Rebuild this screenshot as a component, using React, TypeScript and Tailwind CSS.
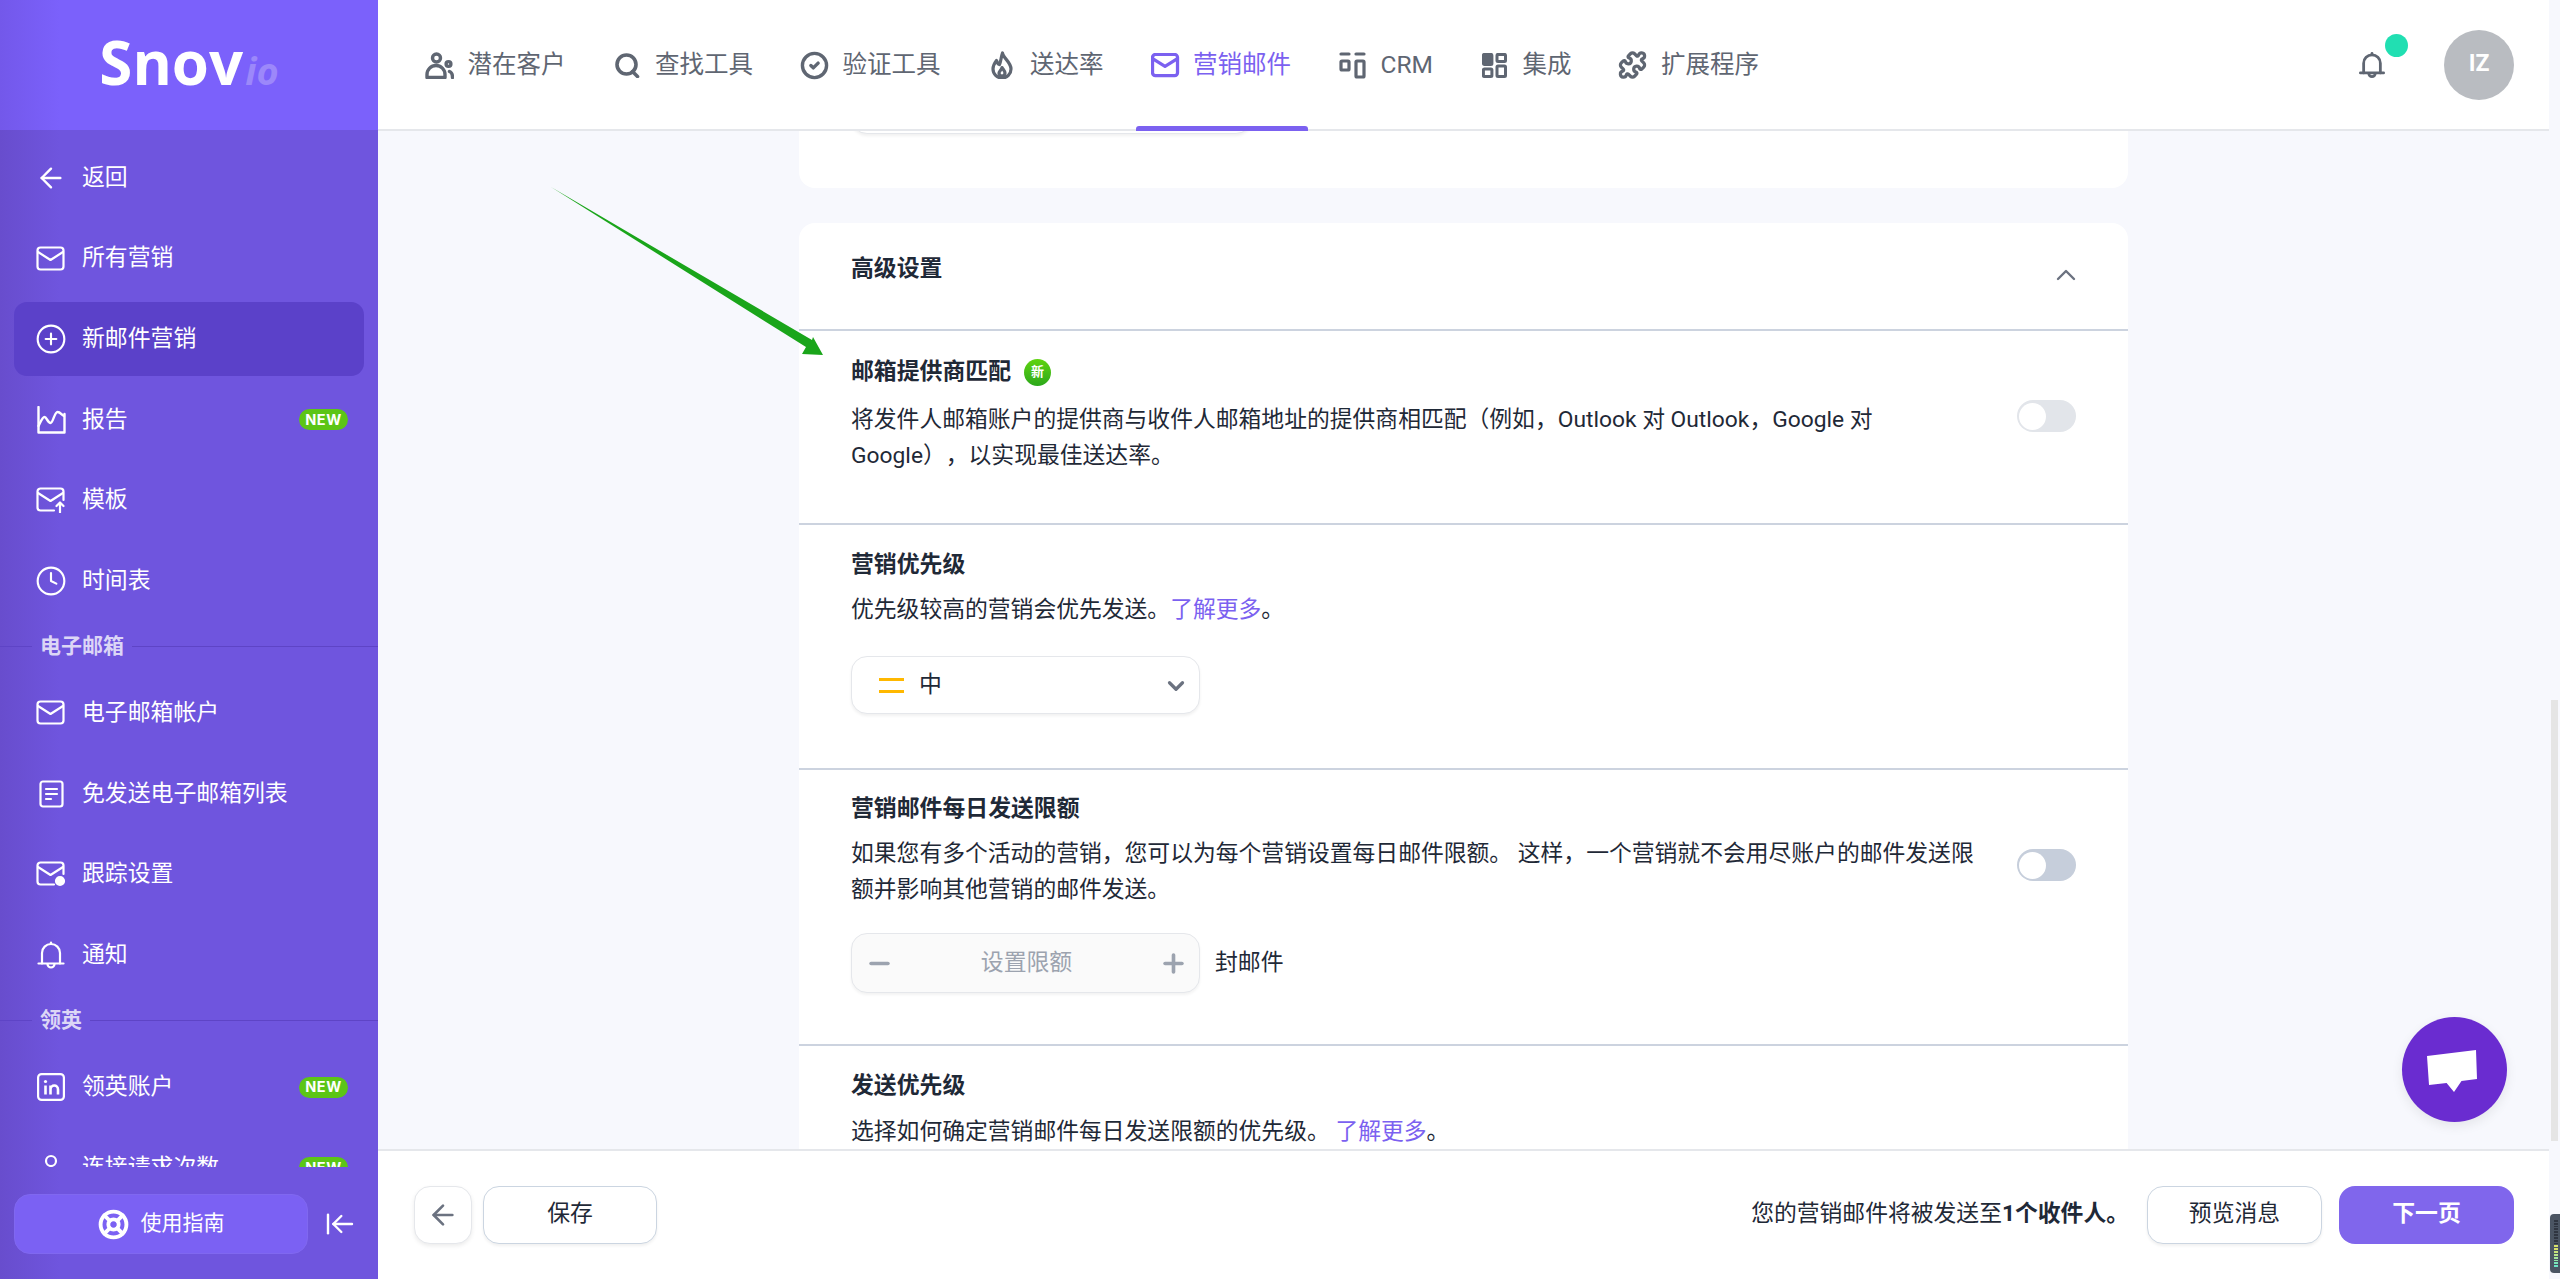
import { ArrowLeft, ArrowLeftToLine, ChevronDown, ChevronUp, CircleCheck, CirclePlus, Clock, LifeBuoy, Minus, Plus, Puzzle } from "lucide-react";
import type { ReactNode } from "react";

function MailIcon({ className = "", extra }: { className?: string; extra?: ReactNode }) {
  return (
    <svg viewBox="0 0 30 26" className={className} fill="none" stroke="currentColor" strokeWidth="2.2" strokeLinecap="round" strokeLinejoin="round">
      {extra ? (
        <path d="M27.5 13V4.5a3 3 0 0 0-3-3h-20a3 3 0 0 0-3 3v16a3 3 0 0 0 3 3H18" />
      ) : (
        <rect x="1.5" y="1.5" width="26" height="22" rx="3" />
      )}
      <path d="M2 6l12.5 8L27 6" />
      {extra}
    </svg>
  );
}

function ChartIcon() {
  return (
    <svg viewBox="0 0 29 28" className="h-[28px] w-[29px]" fill="none" stroke="currentColor" strokeWidth="2.4" strokeLinecap="round" strokeLinejoin="round">
      <path d="M1.5 1v25.500h26V8" />
      <path d="M1.5 20c2.500-5 4-9 6-9s3.500 6 6 6 4-11 7-11 4 3 6.500 4" />
    </svg>
  );
}

function DocIcon() {
  return (
    <svg viewBox="0 0 25 28" className="h-[28px] w-[25px]" fill="none" stroke="currentColor" strokeWidth="2.2" strokeLinecap="round" strokeLinejoin="round">
      <rect x="1.500" y="1.500" width="22" height="25" rx="2.500" />
      <path d="M7 9h11M7 14h11M7 19h5" />
    </svg>
  );
}

function BellIcon({ className = "", width = "2.2" }: { className?: string; width?: string }) {
  return (
    <svg viewBox="0 0 28 28" className={className} fill="none" stroke="currentColor" strokeWidth={width} strokeLinecap="round" strokeLinejoin="round">
      <path d="M1.500 22.500h25" />
      <path d="M5 22.500V12a9 9 0 0 1 18 0v10.500" />
      <path d="M14 3V1.500" />
      <path d="M10.500 23a3.500 3.500 0 0 0 7 0" />
    </svg>
  );
}

function LinkedInIcon() {
  return (
    <svg viewBox="0 0 28 28" className="h-[28px] w-[28px]" fill="none">
      <rect x="1.100" y="1.100" width="25.800" height="25.800" rx="3.500" stroke="currentColor" strokeWidth="2.200" />
      <circle cx="8.500" cy="8.500" r="1.600" fill="currentColor" />
      <path d="M8.500 12.500v9M13.500 21.500v-9M13.500 16.500c0-2.500 1.800-4 3.800-4s3.700 1.500 3.700 4v5" stroke="currentColor" strokeWidth="2.600" />
    </svg>
  );
}

function PersonIcon() {
  return (
    <svg viewBox="0 0 28 28" className="h-[28px] w-[28px]" fill="none" stroke="currentColor" strokeWidth="2.200">
      <circle cx="14" cy="7" r="5" />
      <path d="M4 27c0-6 4-10 10-10s10 4 10 10" />
    </svg>
  );
}

function UsersIcon() {
  return (
    <svg viewBox="0 0 29 27" className="h-[27px] w-[29px]" fill="none" stroke="currentColor" strokeWidth="3.400" strokeLinecap="round" strokeLinejoin="round">
      <circle cx="11.500" cy="6" r="4" />
      <circle cx="23.500" cy="12" r="2.400" />
      <path d="M2 25.500v-3a9 9 0 0 1 18 0v3z" />
      <path d="M24.500 19.500c2 .8 3 2.800 3 6" />
    </svg>
  );
}

function SearchQIcon() {
  return (
    <svg viewBox="0 0 25 25" className="h-[25px] w-[25px]" fill="none" stroke="currentColor" strokeWidth="3.600" strokeLinecap="round">
      <circle cx="11.500" cy="11.500" r="9.500" />
      <path d="M17.500 18.500l5 5" />
    </svg>
  );
}

function FlameIcon() {
  return (
    <svg viewBox="0 0 22 28" className="h-[28px] w-[22px]" fill="none" stroke="currentColor" strokeWidth="3.200" strokeLinecap="round" strokeLinejoin="round">
      <path d="M11.500 2c.500 5 8.500 9 8.500 16a9 9 0 0 1-18 0c0-4 2-6.500 3.500-8.500.5 2 1.500 3.500 3 4 1.500-3 1.500-7.500 3-11.500z" />
      <path d="M11 25c-2 0-3-1.500-3-3 0-2 2.500-3 3-5.500 1 2 3 3.500 3 5.500 0 1.500-1 3-3 3z" />
    </svg>
  );
}

function CrmIcon() {
  return (
    <svg viewBox="0 0 27 27" className="h-[27px] w-[27px]" fill="none" stroke="currentColor" strokeWidth="3.200" strokeLinecap="round" strokeLinejoin="round">
      <path d="M2 2h8M17 2h8" />
      <rect x="2" y="9" width="8" height="9" rx="1" />
      <rect x="17" y="9" width="8" height="16" rx="1" />
    </svg>
  );
}

function GridIcon() {
  return (
    <svg viewBox="0 0 25 25" className="h-[25px] w-[25px]" fill="none" stroke="currentColor" strokeWidth="3" strokeLinejoin="round">
      <rect x="1.400" y="1.400" width="8.500" height="10" rx="1" fill="currentColor" />
      <rect x="15" y="1.400" width="8.500" height="7" rx="1" />
      <rect x="1.400" y="16" width="8.500" height="7.500" rx="1" />
      <rect x="15" y="13" width="8.500" height="10.500" rx="1" />
    </svg>
  );
}

const sideIcons: Record<string, ReactNode> = {
  back: <ArrowLeft className="h-[32px] w-[32px]" strokeWidth={1.8} />,
  mail: <MailIcon className="h-[26px] w-[30px]" />,
  plus: <CirclePlus className="h-[34px] w-[34px]" strokeWidth={1.6} />,
  chart: <ChartIcon />,
  template: (
    <MailIcon
      className="h-[26px] w-[30px]"
      extra={<path d="M24 25.500V16M20.500 19l3.500-3.500 3.500 3.500" />}
    />
  ),
  clock: <Clock className="h-[34px] w-[34px]" strokeWidth={1.6} />,
  doc: <DocIcon />,
  track: <MailIcon className="h-[26px] w-[30px]" extra={<circle cx="24" cy="20" r="4" fill="currentColor" />} />,
  bell: <BellIcon className="h-[28px] w-[28px]" />,
  in: <LinkedInIcon />,
  person: <PersonIcon />,
};

function SideItem({ icon, label, active, badge }: { icon: string; label: string; active?: boolean; badge?: boolean }) {
  return (
    <div className={`flex h-[74px] shrink-0 items-center rounded-[13px] pl-[21px] pr-[16px] ${active ? "bg-[#5b41c9]" : ""}`}>
      <div className="flex w-[32px] shrink-0 items-center justify-center">{sideIcons[icon]}</div>
      <span className="ml-[15px] flex-1 text-[22.86px]">{label}</span>
      {badge && (
        <span className="flex h-[21px] w-[49px] items-center justify-center rounded-full bg-[#5cc516] text-[14.5px] font-bold tracking-[0.6px] [font-family:Inter,sans-serif]">
          NEW
        </span>
      )}
    </div>
  );
}

function SideHeading({ label }: { label: string }) {
  return (
    <div className="flex h-[45px] shrink-0 items-start">
      <div className="-ml-[14px] flex h-[44px] w-[378px] shrink-0 items-center">
        <div className="h-px w-[32px] bg-[#5e44c6]" />
        <span className="px-[8px] text-[21px] font-bold text-[#dcd6f6]">{label}</span>
        <div className="h-px flex-1 bg-[#5e44c6]" />
      </div>
    </div>
  );
}

function Sidebar() {
  return (
    <aside className="flex h-[1279px] w-[378px] shrink-0 flex-col bg-[linear-gradient(90deg,#684dcd_0,#6f55de_60px)] text-white">
      <div className="flex h-[130px] shrink-0 items-center justify-center bg-[linear-gradient(90deg,#7358ea_0,#7b61fb_60px)]">
        <div className="-mt-[6px] flex items-baseline">
          <span className="text-[60px] font-bold leading-none [font-family:'Open_Sans',sans-serif]">Snov</span>
          <span className="ml-[2px] text-[38px] font-bold italic leading-none text-[#9c88fa] [font-family:'Open_Sans',sans-serif]">io</span>
        </div>
      </div>
      <nav className="flex h-[1037px] shrink-0 flex-col gap-[6.6px] overflow-hidden px-[14px] pt-[11px]">
        <SideItem icon="back" label="返回" />
        <SideItem icon="mail" label="所有营销" />
        <SideItem icon="plus" label="新邮件营销" active />
        <SideItem icon="chart" label="报告" badge />
        <SideItem icon="template" label="模板" />
        <SideItem icon="clock" label="时间表" />
        <SideHeading label="电子邮箱" />
        <SideItem icon="mail" label="电子邮箱帐户" />
        <SideItem icon="doc" label="免发送电子邮箱列表" />
        <SideItem icon="track" label="跟踪设置" />
        <SideItem icon="bell" label="通知" />
        <SideHeading label="领英" />
        <SideItem icon="in" label="领英账户" badge />
        <SideItem icon="person" label="连接请求次数" badge />
      </nav>
      <div className="flex items-center px-[14px] pt-[27px]">
        <div className="flex h-[60px] w-[294px] items-center justify-center gap-[12px] rounded-[16px] border border-[#8068f0] bg-[#7b61f3] text-[21px]">
          <LifeBuoy className="h-[31px] w-[31px]" strokeWidth={3} />
          使用指南
        </div>
        <ArrowLeftToLine className="ml-[16px] h-[32px] w-[32px]" strokeWidth={1.8} />
      </div>
    </aside>
  );
}

const navItems: { label: string; icon: ReactNode; active?: boolean }[] = [
  { label: "潜在客户", icon: <UsersIcon /> },
  { label: "查找工具", icon: <SearchQIcon /> },
  { label: "验证工具", icon: <CircleCheck className="h-[31px] w-[31px]" strokeWidth={2.8} /> },
  { label: "送达率", icon: <FlameIcon /> },
  { label: "营销邮件", icon: <MailIcon className="h-[25px] w-[29px] [&_*]:[stroke-width:3.4px]" />, active: true },
  { label: "CRM", icon: <CrmIcon /> },
  { label: "集成", icon: <GridIcon /> },
  { label: "扩展程序", icon: <Puzzle className="h-[30px] w-[30px]" strokeWidth={2.7} /> },
];

function Header() {
  return (
    <header className="flex h-[131px] shrink-0 items-center justify-between border-b-2 border-[#e5e7eb] bg-white pl-[32px] pr-[35px]">
      <div className="flex h-full gap-[17px]">
        {navItems.map((item) => (
          <div
            key={item.label}
            className={`relative flex items-center gap-[13.5px] px-[15px] pt-[1px] text-[24.5px] ${item.active ? "text-[#7b61f0]" : "text-[#5f6672]"}`}
          >
            <div className="flex w-[29px] items-center justify-center">{item.icon}</div>
            {item.label}
            {item.active && <div className="absolute -bottom-[2px] -right-[2px] left-0 h-[5px] rounded-t-[3px] bg-[#7b61f0]" />}
          </div>
        ))}
      </div>
      <div className="flex items-center gap-[59px]">
        <div className="relative text-[#5f6672]">
          <BellIcon className="h-[32px] w-[26px]" width="3" />
          <div className="absolute -right-[23px] -top-[15px] h-[23px] w-[23px] rounded-full bg-[#21dfb2]" />
        </div>
        <div className="flex h-[70px] w-[70px] items-center justify-center rounded-full bg-[#b9bcc1] text-[23px] font-bold text-white">IZ</div>
      </div>
    </header>
  );
}

function Toggle({ className }: { className: string }) {
  return (
    <div className={`flex h-[32px] w-[59px] shrink-0 items-center rounded-full pl-[2px] ${className}`}>
      <div className="h-[27px] w-[27px] rounded-full bg-white" />
    </div>
  );
}

function Title({ children }: { children: ReactNode }) {
  return <div className="text-[22.86px] font-bold leading-[36px] text-[#1f2937]">{children}</div>;
}

function Desc({ children, className = "" }: { children: ReactNode; className?: string }) {
  return <p className={`text-[22.8px] leading-[36px] text-[#1f2937] ${className}`}>{children}</p>;
}

const linkCls = "text-[#7b61f0]";

function ChatBubble() {
  return (
    <div className="absolute bottom-[27px] right-[42px] flex h-[105px] w-[105px] items-center justify-center rounded-full bg-[#6a2cd0] shadow-[0_4px_12px_rgba(0,0,0,0.08)]">
      <svg viewBox="0 0 105 105" className="h-[105px] w-[105px]">
        <path fill="#fff" d="M25 39l49-6 1 29-15.500 2-7.500 11-7.400-9-17.600 2z" />
      </svg>
    </div>
  );
}

function Main() {
  return (
    <main className="relative flex-1 overflow-hidden bg-[#f7f8fd]">
      <div className="mx-auto w-[1329px]">
        <div className="h-[57px] overflow-hidden rounded-b-[16px] bg-white pl-[52px]">
          <div className="-mt-[55px] h-[58px] w-[401px] rounded-[16px] border border-[#e5e7eb] bg-white shadow-[0_2px_3px_rgba(0,0,0,0.06)]" />
        </div>

        <div className="mt-[35px] rounded-t-[16px] bg-white">
          <div className="flex h-[108px] items-start justify-between border-b-2 border-[#ccd3df] pl-[52px] pr-[46px] pt-[28px]">
            <Title>高级设置</Title>
            <ChevronUp className="mt-[8px] h-[32px] w-[32px] text-[#6b7280]" strokeWidth={1.8} />
          </div>

          <section className="flex h-[194px] items-start justify-between border-b-2 border-[#ccd3df] pl-[52px] pr-[52px] pt-[23px]">
            <div>
              <div className="flex items-center gap-[13px]">
                <Title>邮箱提供商匹配</Title>
                <div className="flex h-[27px] w-[27px] items-center justify-center rounded-full bg-gradient-to-b from-[#5fd40f] to-[#2aa81a] text-[13px] font-bold text-white">
                  新
                </div>
              </div>
              <Desc className="mt-[12px]">
                将发件人邮箱账户的提供商与收件人邮箱地址的提供商相匹配（例如，Outlook 对 Outlook，Google 对
                <br />
                Google），以实现最佳送达率。
              </Desc>
            </div>
            <Toggle className="mt-[46px] bg-[#e2e5ea]" />
          </section>

          <section className="h-[245px] border-b-2 border-[#ccd3df] pl-[52px] pr-[52px] pt-[22px]">
            <Title>营销优先级</Title>
            <Desc className="mt-[9px]">
              优先级较高的营销会优先发送。<span className={linkCls}>了解更多</span>。
            </Desc>
            <div className="mt-[28px] flex h-[58px] w-[349px] items-center rounded-[16px] border border-[#e5e7eb] bg-white pl-[27px] pr-[10px] pt-[1px] text-[22.86px] text-[#1f2937] shadow-[0_2px_3px_rgba(0,0,0,0.06)]">
              <div className="flex h-[15px] w-[25px] flex-col justify-between">
                <div className="h-[3px] bg-[#ffb800]" />
                <div className="h-[3px] bg-[#ffb800]" />
              </div>
              <span className="ml-[15px] flex-1">中</span>
              <ChevronDown className="h-[26px] w-[26px] text-[#6b7280]" strokeWidth={3} />
            </div>
          </section>

          <section className="h-[276px] border-b-2 border-[#ccd3df] pl-[52px] pr-[52px] pt-[21px]">
            <Title>营销邮件每日发送限额</Title>
            <div className="flex items-start justify-between">
              <Desc className="mt-[9px]">
                如果您有多个活动的营销，您可以为每个营销设置每日邮件限额。 这样，一个营销就不会用尽账户的邮件发送限
                <br />
                额并影响其他营销的邮件发送。
              </Desc>
              <Toggle className="mt-[22px] bg-[#c6cedb]" />
            </div>
            <div className="mt-[25px] flex items-center">
              <div className="flex h-[60px] w-[349px] items-center justify-between rounded-[16px] border border-[#e5e7eb] bg-[#fafafa] pl-[13px] pr-[11px] text-[22.86px] text-[#9ca3af] shadow-[0_2px_3px_rgba(0,0,0,0.05)]">
                <Minus className="h-[29px] w-[29px]" strokeWidth={3} />
                设置限额
                <Plus className="h-[29px] w-[29px]" strokeWidth={3} />
              </div>
              <span className="ml-[15px] text-[22.86px] text-[#1f2937]">封邮件</span>
            </div>
          </section>

          <section className="pl-[52px] pr-[52px] pt-[22px]">
            <Title>发送优先级</Title>
            <Desc className="mt-[10px]">
              选择如何确定营销邮件每日发送限额的优先级。 <span className={linkCls}>了解更多</span>。
            </Desc>
          </section>
        </div>
      </div>

      <svg className="absolute left-[-378px] top-[-131px] h-[1279px] w-[2560px]" viewBox="0 0 2560 1279">
        <polygon fill="#1aa51a" points="551,187 812,340 813,337 823,355 802,354 806,347" />
      </svg>
      <ChatBubble />
    </main>
  );
}

function Footer() {
  return (
    <footer className="flex h-[130px] shrink-0 items-center justify-between border-t-2 border-[#e5e7eb] bg-white pb-[1px] pl-[36px] pr-[35px]">
      <div className="flex items-center gap-[11px]">
        <div className="flex h-[58px] w-[58px] items-center justify-center rounded-[16px] border border-[#e5e7eb] bg-white text-[#6b7280] shadow-[0_2px_4px_rgba(0,0,0,0.08)]">
          <ArrowLeft className="h-[32px] w-[32px]" strokeWidth={2} />
        </div>
        <div className="flex h-[58px] w-[174px] items-center justify-center rounded-[16px] border border-[#cbd5e1] bg-white text-[22.86px] text-[#1f2937] shadow-[0_2px_3px_rgba(0,0,0,0.06)]">
          保存
        </div>
      </div>
      <div className="flex items-center">
        <span className="text-[22.8px] text-[#1f2937]">
          您的营销邮件将被发送至<b>1个收件人。</b>
        </span>
        <div className="ml-[18px] flex h-[58px] w-[175px] items-center justify-center rounded-[16px] border border-[#cbd5e1] bg-white text-[22.86px] text-[#1f2937] shadow-[0_2px_3px_rgba(0,0,0,0.06)]">
          预览消息
        </div>
        <div className="ml-[17px] flex h-[58px] w-[175px] items-center justify-center rounded-[16px] bg-[#8066ec] text-[22.86px] font-bold text-white">
          下一页
        </div>
      </div>
    </footer>
  );
}

function ScrollStrip() {
  const bars = ["#2f3540", "#2f3540", "#2f3540", "#2f3540", "#2f3540", "#2f3540", "#2f3540", "#2f3540", "#2f3540", "#d7e06a", "#d7e06a", "#c9e27a", "#b9e58a", "#a5e69a", "#8fe7aa", "#7be6ba", "#6be4c6"];
  return (
    <div className="relative flex w-[11px] shrink-0 justify-center bg-[#f7f8fd]">
      <div className="mt-[700px] h-[441px] w-[7px] bg-[#e5e5e5]" />
      <div className="absolute right-0 top-[1214px] flex h-[59px] w-[10px] flex-col gap-[1px] rounded-l-[4px] bg-[#4b5563] py-[6px] pl-[4px]">
        {bars.map((c, i) => (
          <div key={i} className="h-[2px] w-[4px]" style={{ backgroundColor: c }} />
        ))}
      </div>
    </div>
  );
}

export default function App() {
  return (
    <div className="flex h-[1279px] w-full overflow-hidden bg-white [text-spacing-trim:space-all] [font-family:Roboto,'Noto_Sans_CJK_SC',sans-serif]">
      <Sidebar />
      <div className="flex min-w-0 flex-1 flex-col">
        <Header />
        <Main />
        <Footer />
      </div>
      <ScrollStrip />
    </div>
  );
}
